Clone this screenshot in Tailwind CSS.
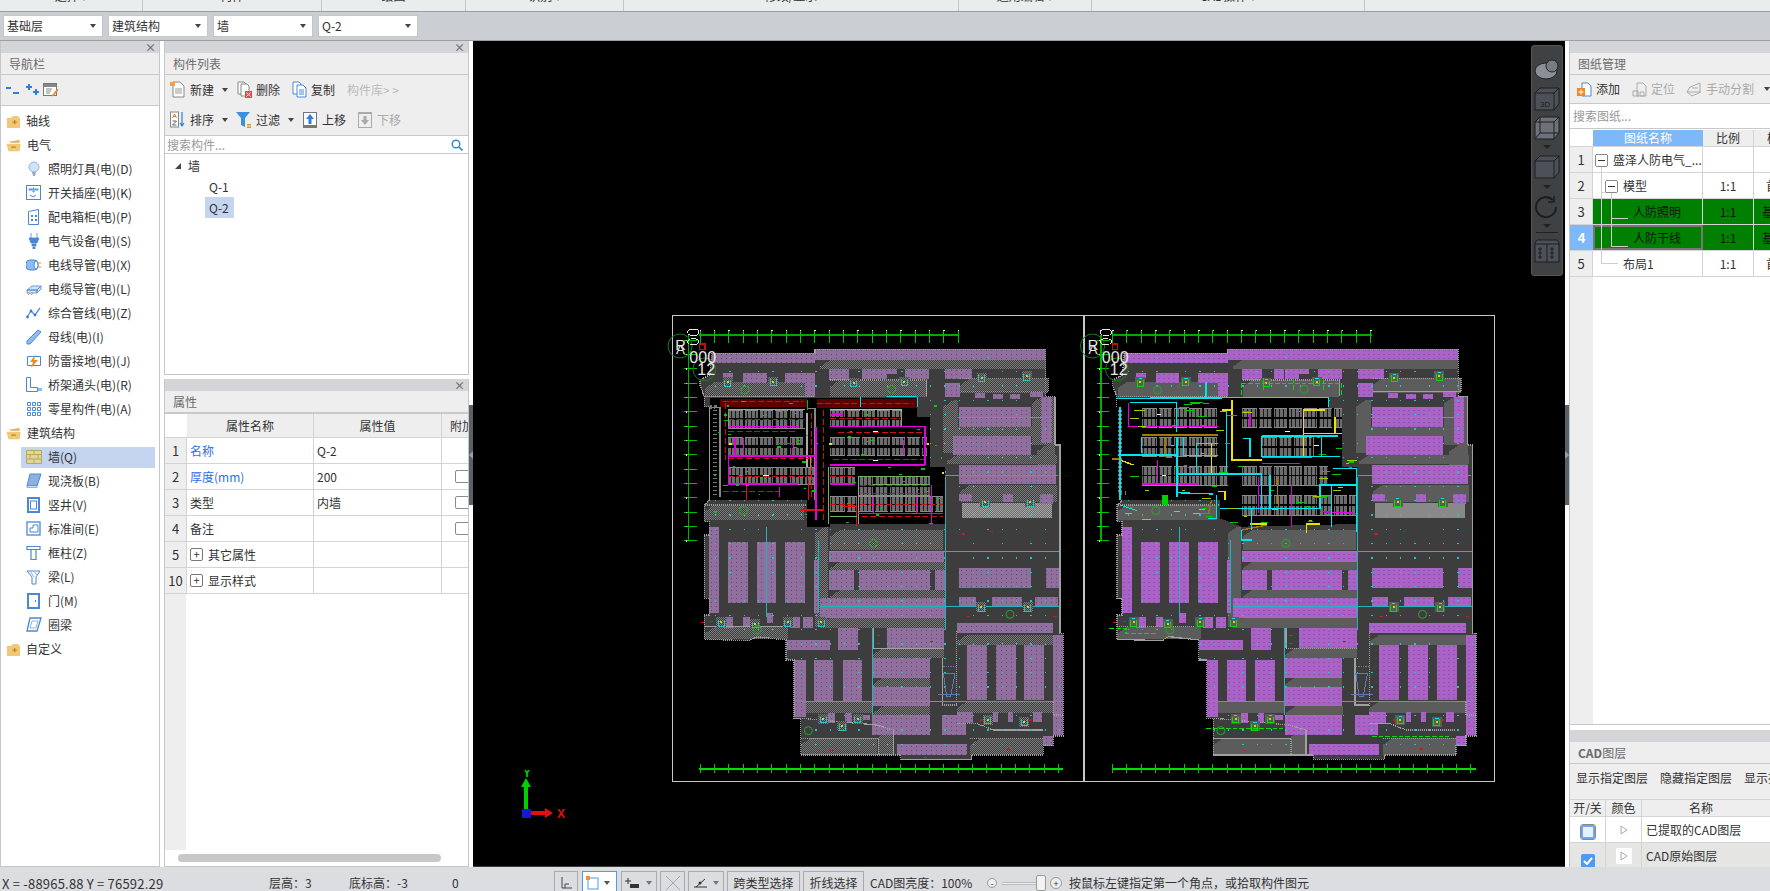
<!DOCTYPE html>
<html lang="zh">
<head>
<meta charset="UTF-8" />
<title>GCL</title>
<script src="https://cdn.jsdelivr.net/npm/@tailwindcss/browser@4"></script>
</head>
<body class="bg-white">
<div class="w-[1770px] h-[891px] flex flex-col overflow-hidden bg-white text-[12px] leading-none text-[#333] font-['Noto_Sans_CJK_SC',sans-serif]">

  <!-- ribbon, cut off at the top -->
  <div class="h-[12px] shrink-0 flex bg-[#e9edee] border-b border-[#9a9ea3] overflow-hidden">
    <div class="w-[143px] border-r border-[#c4c6c9] flex justify-center"><span class="-mt-[10px] h-[16px]">选择 ▾</span></div>
    <div class="w-[179px] border-r border-[#c4c6c9] flex justify-center"><span class="-mt-[10px] h-[16px]">构件</span></div>
    <div class="w-[144px] border-r border-[#c4c6c9] flex justify-center"><span class="-mt-[10px] h-[16px]">绘图</span></div>
    <div class="w-[158px] border-r border-[#c4c6c9] flex justify-center"><span class="-mt-[10px] h-[16px]">识别 ▾</span></div>
    <div class="w-[335px] border-r border-[#c4c6c9] flex justify-center"><span class="-mt-[10px] h-[16px]">修改/显示</span></div>
    <div class="w-[133px] border-r border-[#c4c6c9] flex justify-center"><span class="-mt-[10px] h-[16px]">通用编辑 ▾</span></div>
    <div class="w-[273px] border-r border-[#c4c6c9] flex justify-center"><span class="-mt-[10px] h-[16px]">CAD操作 ▾</span></div>
  </div>

  <!-- combo row -->
  <div class="h-[29px] shrink-0 flex items-center gap-[5px] pl-[3px] bg-[#cbced3] border-b border-[#9b9ea2]">
    <div class="w-[100px] h-[22px] bg-white border border-[#c6c6c6] flex items-center justify-between pl-[3px] pr-[6px]"><span>基础层</span><span class="w-0 h-0 border-x-[3px] border-x-transparent border-t-[4px] border-t-[#444]"></span></div>
    <div class="w-[100px] h-[22px] bg-white border border-[#c6c6c6] flex items-center justify-between pl-[3px] pr-[6px]"><span>建筑结构</span><span class="w-0 h-0 border-x-[3px] border-x-transparent border-t-[4px] border-t-[#444]"></span></div>
    <div class="w-[100px] h-[22px] bg-white border border-[#c6c6c6] flex items-center justify-between pl-[3px] pr-[6px]"><span>墙</span><span class="w-0 h-0 border-x-[3px] border-x-transparent border-t-[4px] border-t-[#444]"></span></div>
    <div class="w-[100px] h-[22px] bg-white border border-[#c6c6c6] flex items-center justify-between pl-[3px] pr-[6px]"><span>Q-2</span><span class="w-0 h-0 border-x-[3px] border-x-transparent border-t-[4px] border-t-[#444]"></span></div>
  </div>

  <div class="flex-1 flex min-h-0">
    <!-- nav -->
    <div class="w-[160px] shrink-0 flex flex-col border-x border-[#c4c6c9]">
      <div class="h-[12px] bg-[#d3d5d9] flex items-center justify-end pr-[3px] text-[#777] text-[11px] font-bold">×</div>
      <div class="h-[22px] bg-[#eeeeee] border-b border-[#c9c9c9] flex items-center pl-[8px] text-[#6b6b6b]">导航栏</div>
      <div class="h-[31px] bg-[#eeeeee] border-b border-[#c9c9c9] flex items-center pl-[4px] gap-[3px]">
        <svg class="w-[16px] h-[16px]" viewBox="0 0 16 16"><path d="M1 5h5v2H1zM8 10h6v2H8z" fill="#2f7fd8"/></svg>
        <svg class="w-[16px] h-[16px]" viewBox="0 0 16 16"><path d="M4 2v2H2v2h2v2h2V6h2V4H6V2zM11 7v2H9v2h2v2h2v-2h2V9h-2V7z" fill="#2f7fd8"/></svg>
        <svg class="w-[16px] h-[16px]" viewBox="0 0 16 16"><rect x=".5" y="1.5" width="13" height="12" fill="#fff" stroke="#777"/><path d="M1 2h12v3H1z" fill="#888"/><path d="M3 7h6M3 9h5M3 11h4" stroke="#888"/><path d="M9 13l5-6 1.500 1-5 6-2 .5z" fill="#f08a24"/></svg>
      </div>
      <div class="flex-1 pt-[3px]">
        <div class="h-[24px] flex items-center gap-[5px] pl-[5px]"><svg class="w-[15px] h-[15px]" viewBox="0 0 16 16"><path d="M1 4h5l1-2h6l1 2h1v11H1z" fill="#f0c87a"/><path d="M7 8h1.500V6.500h1.500V8h1.500v1.500H10V11H8.500V9.500H7z" fill="#c98a2a"/></svg>轴线</div>
        <div class="h-[24px] flex items-center gap-[5px] pl-[5px]"><svg class="w-[16px] h-[15px]" viewBox="0 0 16 16"><path d="M2 4l12-2v3H5z" fill="#d8b26a"/><path d="M0 6h15l-1 8H2z" fill="#f0c87a"/><path d="M5 9h5v1.500H5z" fill="#c98a2a"/></svg>电气</div>

        <div class="h-[24px] flex items-center gap-[6px] pl-[25px]"><svg class="w-[16px] h-[16px]" viewBox="0 0 16 16"><circle cx="8" cy="6" r="5" fill="#cfe3f8" stroke="#8fb6dd"/><path d="M6 11h4l-1 4H7z" fill="#9aa9b8"/></svg>照明灯具(电)(D)</div>
        <div class="h-[24px] flex items-center gap-[6px] pl-[25px]"><svg class="w-[16px] h-[16px]" viewBox="0 0 16 16"><rect x=".5" y=".5" width="14" height="14" fill="#fff" stroke="#4a88d6"/><path d="M3 4h3v1H3zM9 4h3v1H9zM7 3h1v4H7zM4 10l3 2 3-2" stroke="#4a88d6" fill="none"/></svg>开关插座(电)(K)</div>
        <div class="h-[24px] flex items-center gap-[6px] pl-[25px]"><svg class="w-[16px] h-[16px]" viewBox="0 0 16 16"><path d="M2.500 2.500l10-2v15h-10z" fill="#fff" stroke="#4a88d6"/><path d="M5 6h2v2H5zM9 6h2v2H9zM5 10h2v2H5zM9 10h2v2H9z" fill="#4a88d6"/></svg>配电箱柜(电)(P)</div>
        <div class="h-[24px] flex items-center gap-[6px] pl-[25px]"><svg class="w-[16px] h-[16px]" viewBox="0 0 16 16"><path d="M5 0v5M11 0v5M3 5h10L11 10H5zM6 11h4v2H6zM7 14h2v2H7z" fill="#4a88d6" stroke="#4a88d6" stroke-width=".8"/></svg>电气设备(电)(S)</div>
        <div class="h-[24px] flex items-center gap-[6px] pl-[25px]"><svg class="w-[16px] h-[16px]" viewBox="0 0 16 16"><rect x="0" y="3" width="12" height="10" rx="4" fill="#8fbdf0" stroke="#4a88d6"/><ellipse cx="10" cy="8" rx="2" ry="4" fill="#fff" stroke="#4a88d6"/><path d="M12 6h3M12 10h3" stroke="#f08a24"/></svg>电线导管(电)(X)</div>
        <div class="h-[24px] flex items-center gap-[6px] pl-[25px]"><svg class="w-[16px] h-[16px]" viewBox="0 0 16 16"><path d="M1 9l5-4h9l-4 4zM1 9h10v3H1zM11 9l4-4v3l-4 4z" fill="#cfe3f8" stroke="#4a88d6" stroke-width=".8"/><path d="M2 14l2-2M5 14l2-2" stroke="#f08a24"/></svg>电缆导管(电)(L)</div>
        <div class="h-[24px] flex items-center gap-[6px] pl-[25px]"><svg class="w-[16px] h-[16px]" viewBox="0 0 16 16"><path d="M1 12l4-6 4 4 5-7" fill="none" stroke="#5a8fd0" stroke-width="1.300"/><circle cx="5" cy="6" r="1.400" fill="#2f7fd8"/><circle cx="9" cy="10" r="1.400" fill="#2f7fd8"/><circle cx="1.500" cy="12" r="1.400" fill="#2f7fd8"/></svg>综合管线(电)(Z)</div>
        <div class="h-[24px] flex items-center gap-[6px] pl-[25px]"><svg class="w-[16px] h-[16px]" viewBox="0 0 16 16"><path d="M1 12L12 1l3 2L4 15H1z" fill="#8fbdf0" stroke="#4a88d6"/></svg>母线(电)(I)</div>
        <div class="h-[24px] flex items-center gap-[6px] pl-[25px]"><svg class="w-[16px] h-[16px]" viewBox="0 0 16 16"><path d="M1.500 3.500h13v9h-13z" fill="#fff" stroke="#4a88d6"/><path d="M10 1L4 9h3l-2 6 7-8H8z" fill="#f08a24"/></svg>防雷接地(电)(J)</div>
        <div class="h-[24px] flex items-center gap-[6px] pl-[25px]"><svg class="w-[16px] h-[16px]" viewBox="0 0 16 16"><path d="M.5.5h4v10h7v4h-11z" fill="#fff" stroke="#4a88d6"/><path d="M12 11h4v3h-4z" fill="#8fbdf0"/></svg>桥架通头(电)(R)</div>
        <div class="h-[24px] flex items-center gap-[6px] pl-[25px]"><svg class="w-[16px] h-[16px]" viewBox="0 0 16 16"><path d="M1.500 1.500h3v3h-3zM6.500 1.500h3v3h-3zM11.500 1.500h3v3h-3zM1.500 6.500h3v3h-3zM6.500 6.500h3v3h-3zM11.500 6.500h3v3h-3zM1.500 11.500h3v3h-3zM6.500 11.500h3v3h-3zM11.500 11.500h3v3h-3z" fill="none" stroke="#4a88d6"/></svg>零星构件(电)(A)</div>

        <div class="h-[24px] flex items-center gap-[5px] pl-[5px]"><svg class="w-[16px] h-[15px]" viewBox="0 0 16 16"><path d="M2 4l12-2v3H5z" fill="#d8b26a"/><path d="M0 6h15l-1 8H2z" fill="#f0c87a"/><path d="M5 9h5v1.500H5z" fill="#c98a2a"/></svg>建筑结构</div>

        <div class="h-[21px] my-[1.5px] ml-[20px] mr-[4px] bg-[#c5d5ef] flex items-center gap-[6px] pl-[5px]"><svg class="w-[16px] h-[14px]" viewBox="0 0 16 14"><path d="M.5.500h15v13H.5zM.5 4.500h15M.5 9h15M8 .5v4M4 4.500V9M12 4.500V9M8 9v4.500" fill="#dfd5a0" stroke="#b8a95a"/></svg>墙(Q)</div>
        <div class="h-[24px] flex items-center gap-[6px] pl-[25px]"><svg class="w-[16px] h-[16px]" viewBox="0 0 16 16"><path d="M4 1h11l-4 12H1z" fill="#8fb0dd" stroke="#4a88d6"/><path d="M1 13h10v1.500H1z" fill="#fff" stroke="#4a88d6" stroke-width=".6"/></svg>现浇板(B)</div>
        <div class="h-[24px] flex items-center gap-[6px] pl-[25px]"><svg class="w-[16px] h-[16px]" viewBox="0 0 16 16"><rect x="2" y="1" width="11" height="14" fill="#fff" stroke="#4a88d6" stroke-width="2"/><rect x="4.500" y="4" width="6" height="8" fill="#fff" stroke="#4a88d6"/></svg>竖井(V)</div>
        <div class="h-[24px] flex items-center gap-[6px] pl-[25px]"><svg class="w-[16px] h-[16px]" viewBox="0 0 16 16"><rect x="1" y="1" width="13" height="13" fill="#fff" stroke="#4a88d6" stroke-width="1.300"/><path d="M4 7h3V4h5v7H4z" fill="none" stroke="#4a88d6"/></svg>标准间(E)</div>
        <div class="h-[24px] flex items-center gap-[6px] pl-[25px]"><svg class="w-[16px] h-[16px]" viewBox="0 0 16 16"><path d="M1 1.500h13v3H1zM5 4.500h5v10H5z" fill="#fff" stroke="#4a88d6" stroke-width="1.200"/></svg>框柱(Z)</div>
        <div class="h-[24px] flex items-center gap-[6px] pl-[25px]"><svg class="w-[16px] h-[16px]" viewBox="0 0 16 16"><path d="M1 2h13l-4 6v7H6V8z" fill="#fff" stroke="#4a88d6"/><path d="M4 2l4 6M8 2l3 4" stroke="#8fb6dd"/></svg>梁(L)</div>
        <div class="h-[24px] flex items-center gap-[6px] pl-[25px]"><svg class="w-[16px] h-[16px]" viewBox="0 0 16 16"><rect x="2" y="1" width="11" height="14" fill="#fff" stroke="#4a88d6" stroke-width="2"/><path d="M9 7h1v2H9z" fill="#4a88d6"/></svg>门(M)</div>
        <div class="h-[24px] flex items-center gap-[6px] pl-[25px]"><svg class="w-[16px] h-[16px]" viewBox="0 0 16 16"><path d="M4 1h11l-4 13H1z" fill="#fff" stroke="#4a88d6" stroke-width="1.300"/><path d="M6 4h6l-2 7H4z" fill="none" stroke="#8fb6dd"/></svg>圈梁</div>
        <div class="h-[24px] flex items-center gap-[5px] pl-[5px]"><svg class="w-[15px] h-[15px]" viewBox="0 0 16 16"><path d="M1 4h5l1-2h6l1 2h1v11H1z" fill="#f0c87a"/><path d="M7 8h1.500V6.500h1.500V8h1.500v1.500H10V11H8.500V9.500H7z" fill="#c98a2a"/></svg>自定义</div>
      </div>
      <div class="h-px bg-[#c4c6c9]"></div>
    </div>

    <div class="w-[4px] shrink-0"></div>

    <!-- component list + properties -->
    <div class="w-[305px] shrink-0 flex flex-col">
      <div class="h-[334px] shrink-0 flex flex-col border-x border-b border-[#c4c6c9]">
        <div class="h-[12px] bg-[#d3d5d9] flex items-center justify-end pr-[3px] text-[#777] text-[11px] font-bold">×</div>
        <div class="h-[22px] bg-[#eeeeee] border-b border-[#c9c9c9] flex items-center pl-[8px] text-[#6b6b6b]">构件列表</div>
        <div class="h-[29px] bg-[#eeeeee] flex items-center pl-[5px]">
          <svg class="w-[15px] h-[17px] mr-[5px]" viewBox="0 0 15 17"><path d="M3 1h7l4 4v11H3z" fill="#fff" stroke="#888"/><path d="M5 8h7M5 10h7M5 12h7" stroke="#999"/><path d="M0 1h5v4H0z" fill="#f3a33a"/></svg><span class="w-[32px]">新建</span><span class="w-0 h-0 mr-[9px] border-x-[3px] border-x-transparent border-t-[4px] border-t-[#444]"></span>
          <svg class="w-[15px] h-[17px] mr-[4px]" viewBox="0 0 15 17"><path d="M1 1h6l2 2v10H1z" fill="#fff" stroke="#888"/><path d="M4 3h6l2 2v10H4z" fill="#fff" stroke="#888"/><path d="M8 10h7v7H8z" fill="#e04b4b"/><path d="M9.500 11.500l4 4m0-4l-4 4" stroke="#fff"/></svg><span class="w-[36px]">删除</span>
          <svg class="w-[15px] h-[17px] mr-[4px]" viewBox="0 0 15 17"><path d="M1 1h6l2 2v10H1z" fill="#fff" stroke="#4a88d6"/><path d="M5 4h6l3 3v9H5z" fill="#fff" stroke="#4a88d6"/><path d="M7 9h5M7 11h5M7 13h5" stroke="#4a88d6"/></svg><span class="w-[36px]">复制</span>
          <span class="text-[#bbbbbb] whitespace-nowrap">构件库&gt; &gt;</span>
        </div>
        <div class="h-[32px] bg-[#eeeeee] border-b border-[#c9c9c9] flex items-center pl-[5px]">
          <svg class="w-[15px] h-[17px] mr-[5px]" viewBox="0 0 15 17"><rect x=".5" y="1" width="8" height="15" fill="#fff" stroke="#888"/><path d="M2.500 7l2-4 2 4M3 5.500h3" fill="none" stroke="#e07a2a"/><path d="M2.500 10h4l-4 4h4" fill="none" stroke="#666"/><path d="M12 1v13M10 12l2 3 2-3" fill="none" stroke="#2f7fd8" stroke-width="1.200"/></svg><span class="w-[32px]">排序</span><span class="w-0 h-0 mr-[8px] border-x-[3px] border-x-transparent border-t-[4px] border-t-[#444]"></span>
          <svg class="w-[15px] h-[16px] mr-[5px]" viewBox="0 0 15 16"><path d="M0 0h14L9 6v9L5 13V6z" fill="#3d8fe0"/><path d="M11 12h4v1.500h-4zM11 14.500h4V16h-4z" fill="#f08a24"/></svg><span class="w-[32px]">过滤</span><span class="w-0 h-0 mr-[9px] border-x-[3px] border-x-transparent border-t-[4px] border-t-[#444]"></span>
          <svg class="w-[14px] h-[16px] mr-[5px]" viewBox="0 0 14 16"><rect x=".5" y=".5" width="13" height="14" fill="#fff" stroke="#777"/><path d="M0 13h14v3H0z" fill="#777"/><path d="M7 2l4 5H8.500v5h-3V7H3z" fill="#2f7fd8"/></svg><span class="w-[36px]">上移</span>
          <svg class="w-[14px] h-[16px] mr-[5px]" viewBox="0 0 14 16"><rect x=".5" y=".5" width="13" height="15" fill="#eee" stroke="#aaa"/><path d="M0 0h14v2H0z" fill="#aaa"/><path d="M7 13l4-5H8.500V4h-3v4H3z" fill="#aaa"/></svg><span class="text-[#aaaaaa]">下移</span>
        </div>
        <div class="h-[18px] border-b border-[#c9c9c9] flex items-center justify-between pl-[2px] pr-[5px] text-[#999]">搜索构件...<svg class="w-[12px] h-[12px]" viewBox="0 0 12 12"><circle cx="5" cy="5" r="3.800" fill="none" stroke="#2f86c8" stroke-width="1.400"/><path d="M8 8l3.500 3.500" stroke="#2f86c8" stroke-width="1.600"/></svg></div>
        <div class="flex-1 pt-[1px]">
          <div class="h-[21px] flex items-center pl-[10px]"><span class="w-0 h-0 mr-[7px] border-l-[6px] border-l-transparent border-b-[6px] border-b-[#444]"></span>墙</div>
          <div class="h-[21px] flex items-center pl-[44px]">Q-1</div>
          <div class="h-[21px] ml-[40px] w-[29px] bg-[#c5d5ef] flex items-center pl-[4px]">Q-2</div>
        </div>
      </div>

      <div class="h-[4px] shrink-0"></div>

      <div class="flex-1 flex flex-col border-x border-b border-[#c4c6c9] overflow-hidden">
        <div class="h-[12px] shrink-0 bg-[#d3d5d9] flex items-center justify-end pr-[3px] text-[#777] text-[11px] font-bold">×</div>
        <div class="h-[23px] shrink-0 bg-[#eeeeee] border-b-2 border-[#c9c9c9] flex items-center pl-[8px] text-[#6b6b6b]">属性</div>
        <div class="h-[24px] shrink-0 flex border-b border-[#d4d4d4]">
          <div class="w-[22px] bg-white"></div>
          <div class="w-[127px] bg-[#eeeeee] border-r border-[#d4d4d4] flex items-center justify-center">属性名称</div>
          <div class="w-[128px] bg-[#eeeeee] border-r border-[#d4d4d4] flex items-center justify-center">属性值</div>
          <div class="flex-1 bg-[#eeeeee] flex items-center pl-[8px] whitespace-nowrap overflow-hidden">附加</div>
        </div>
        <div class="h-[26px] shrink-0 flex border-b border-[#d4d4d4]">
          <div class="w-[22px] bg-[#eeeeee] border-r border-[#d4d4d4] flex items-center justify-center text-[13px]">1</div>
          <div class="w-[127px] border-r border-[#d4d4d4] flex items-center pl-[3px] text-[#2f6fe8]">名称</div>
          <div class="w-[128px] border-r border-[#d4d4d4] flex items-center pl-[3px]">Q-2</div>
          <div class="flex-1"></div>
        </div>
        <div class="h-[26px] shrink-0 flex border-b border-[#d4d4d4]">
          <div class="w-[22px] bg-[#eeeeee] border-r border-[#d4d4d4] flex items-center justify-center text-[13px]">2</div>
          <div class="w-[127px] border-r border-[#d4d4d4] flex items-center pl-[3px] text-[#2f6fe8]">厚度(mm)</div>
          <div class="w-[128px] border-r border-[#d4d4d4] flex items-center pl-[3px]">200</div>
          <div class="flex-1 flex items-center overflow-hidden pl-[13px]"><div class="w-[16px] h-[13px] shrink-0 border border-[#8a8a8a] rounded-[2px]"></div></div>
        </div>
        <div class="h-[26px] shrink-0 flex border-b border-[#d4d4d4]">
          <div class="w-[22px] bg-[#eeeeee] border-r border-[#d4d4d4] flex items-center justify-center text-[13px]">3</div>
          <div class="w-[127px] border-r border-[#d4d4d4] flex items-center pl-[3px]">类型</div>
          <div class="w-[128px] border-r border-[#d4d4d4] flex items-center pl-[3px]">内墙</div>
          <div class="flex-1 flex items-center overflow-hidden pl-[13px]"><div class="w-[16px] h-[13px] shrink-0 border border-[#8a8a8a] rounded-[2px]"></div></div>
        </div>
        <div class="h-[26px] shrink-0 flex border-b border-[#d4d4d4]">
          <div class="w-[22px] bg-[#eeeeee] border-r border-[#d4d4d4] flex items-center justify-center text-[13px]">4</div>
          <div class="w-[127px] border-r border-[#d4d4d4] flex items-center pl-[3px]">备注</div>
          <div class="w-[128px] border-r border-[#d4d4d4]"></div>
          <div class="flex-1 flex items-center overflow-hidden pl-[13px]"><div class="w-[16px] h-[13px] shrink-0 border border-[#8a8a8a] rounded-[2px]"></div></div>
        </div>
        <div class="h-[26px] shrink-0 flex border-b border-[#d4d4d4]">
          <div class="w-[22px] bg-[#eeeeee] border-r border-[#d4d4d4] flex items-center justify-center text-[13px]">5</div>
          <div class="w-[127px] border-r border-[#d4d4d4] flex items-center pl-[3px] gap-[5px]"><span class="w-[13px] h-[13px] border border-[#777] rounded-[2px] flex items-center justify-center text-[11px]">+</span>其它属性</div>
          <div class="w-[128px] border-r border-[#d4d4d4]"></div>
          <div class="flex-1"></div>
        </div>
        <div class="h-[26px] shrink-0 flex border-b border-[#d4d4d4]">
          <div class="w-[22px] bg-[#eeeeee] border-r border-[#d4d4d4] flex items-center justify-center text-[13px]">10</div>
          <div class="w-[127px] border-r border-[#d4d4d4] flex items-center pl-[3px] gap-[5px]"><span class="w-[13px] h-[13px] border border-[#777] rounded-[2px] flex items-center justify-center text-[11px]">+</span>显示样式</div>
          <div class="w-[128px] border-r border-[#d4d4d4]"></div>
          <div class="flex-1"></div>
        </div>
        <div class="flex-1 flex"><div class="w-[21px] bg-[#eeeeee]"></div></div>
        <div class="h-[16px] shrink-0 flex items-center pl-[13px]"><div class="w-[263px] h-[8px] bg-[#c8c8c8] rounded-[4px]"></div></div>
      </div>
    </div>

    <!-- splitter -->
    <div class="w-[4px] shrink-0 flex flex-col"><div class="h-[364px]"></div><div class="h-[100px] bg-[#5a6068] flex items-center"><span class="w-0 h-0 border-y-[4px] border-y-transparent border-r-[4px] border-r-[#9aa0a8]"></span></div></div>

    <!-- cad canvas -->
    <div class="w-[1092px] shrink-0 bg-black relative border-b border-[#3a3a3a] overflow-hidden">
      <svg id="cad" class="absolute inset-0" width="1092" height="825" viewBox="-561 -777 3276 2475" shape-rendering="crispEdges">
        <defs>
          <pattern id="hatch" width="6" height="6" patternUnits="userSpaceOnUse"><rect width="6" height="6" fill="#3c3c3c"/><rect width="3" height="3" fill="#7c7c7c"/><rect x="3" y="3" width="3" height="3" fill="#7c7c7c"/></pattern>
          <pattern id="hatch2" width="6" height="6" patternUnits="userSpaceOnUse"><rect width="6" height="6" fill="#6a6a6a"/><rect width="3" height="3" fill="#a8a8a8"/><rect x="3" y="3" width="3" height="3" fill="#a8a8a8"/></pattern>
          <pattern id="pl" width="15" height="12" patternUnits="userSpaceOnUse"><rect width="15" height="12" fill="#906f9e"/><rect x="3" y="6" width="3" height="3" fill="#5c4d62"/></pattern>
          <pattern id="pr" width="15" height="12" patternUnits="userSpaceOnUse"><rect width="15" height="12" fill="#aa62c9"/><rect x="3" y="6" width="3" height="3" fill="#6d4a7e"/></pattern>
          <pattern id="st" width="12" height="3" patternUnits="userSpaceOnUse"><rect width="12" height="3" fill="#1a1a1a"/><rect width="9" height="3" fill="#6c6c6c"/></pattern>
        </defs>
      </svg>

      <!-- axis marker -->
      <svg class="absolute left-[34px] top-[729px]" width="70" height="60" viewBox="0 0 70 60">
        <path d="M19 8l-5 9h3v24h4V17h3z" fill="#00d000"/>
        <path d="M24 41h14v-3l8 5-8 5v-3H24z" fill="#e01010"/>
        <rect x="15" y="39" width="9" height="9" fill="#1818d8"/>
        <text x="16" y="7" fill="#00d000" font-size="12" font-family="Liberation Sans" font-weight="bold">Y</text>
        <text x="50" y="48" fill="#e01010" font-size="12" font-family="Liberation Sans" font-weight="bold">X</text>
      </svg>

      <!-- view cube bar -->
      <div class="absolute left-[1058px] top-[4px] w-[32px] h-[231px] bg-[#3f4143] rounded-[3px] border border-[#555] flex flex-col items-center pt-[12px]">
        <svg class="w-[26px] h-[24px]" viewBox="0 0 26 24"><ellipse cx="12" cy="13" rx="11" ry="8" fill="#8b8f96" stroke="#222"/><circle cx="18" cy="8" r="6" fill="#787c84" stroke="#222"/></svg>
        <svg class="w-[26px] h-[24px] mt-[5px]" viewBox="0 0 26 24"><path d="M1 6l5-5h19v16l-5 6H1z" fill="#4c5159" stroke="#1c1e20"/><path d="M1 6h19v17M20 6l5-5" fill="none" stroke="#1c1e20"/><text x="6" y="20" font-size="8" fill="#1c1e20" font-family="Liberation Sans">3D</text></svg>
        <svg class="w-[26px] h-[24px] mt-[5px]" viewBox="0 0 26 24"><path d="M1 6l5-5h19v16l-5 6H1z" fill="#6d727a" stroke="#1c1e20"/><path d="M1 6h19v17M20 6l5-5M6 1v16h19M6 17l-5 6" fill="none" stroke="#1c1e20"/></svg>
        <span class="w-0 h-0 mt-[5px] border-x-[4px] border-x-transparent border-t-[4px] border-t-[#222]"></span>
        <svg class="w-[26px] h-[24px] mt-[6px]" viewBox="0 0 26 24"><path d="M1 6l5-5h19v16l-5 6H1z" fill="#4c5159" stroke="#1c1e20"/><path d="M1 6h19v17M20 6l5-5" fill="none" stroke="#1c1e20"/></svg>
        <span class="w-0 h-0 mt-[6px] border-x-[4px] border-x-transparent border-t-[4px] border-t-[#222]"></span>
        <svg class="w-[24px] h-[24px] mt-[6px]" viewBox="0 0 24 24"><path d="M21 12a10 10 0 1 1-3-7" fill="none" stroke="#1c1e20" stroke-width="2"/><path d="M19 1v6h-6" fill="none" stroke="#1c1e20" stroke-width="1.500"/></svg>
        <span class="w-0 h-0 mt-[5px] border-x-[4px] border-x-transparent border-t-[4px] border-t-[#222]"></span>
        <div class="w-[22px] h-px bg-[#222] mt-[4px]"></div>
        <svg class="w-[26px] h-[24px] mt-[6px]" viewBox="0 0 26 24"><path d="M3 1h20l2 3v19H1V4z" fill="#4c5159" stroke="#1c1e20"/><path d="M1 5h24M13 5v18M5 9h2v2H5zM5 13h2v2H5zM5 17h2v2H5zM17 9h2v2h-2zM17 13h2v2h-2zM17 17h2v2h-2z" fill="none" stroke="#1c1e20"/></svg>
      </div>
    </div>

    <!-- splitter -->
    <div class="w-[4px] shrink-0 flex flex-col"><div class="h-[364px]"></div><div class="h-[100px] bg-[#5a6068] flex items-center justify-end"><span class="w-0 h-0 border-y-[4px] border-y-transparent border-l-[4px] border-l-[#9aa0a8]"></span></div></div>

    <!-- right side -->
    <div class="w-[201px] shrink-0 flex flex-col border-l border-[#c4c6c9] overflow-hidden">
      <div class="h-[12px] shrink-0 bg-[#d3d5d9]"></div>
      <div class="h-[22px] shrink-0 bg-[#eeeeee] border-b border-[#c9c9c9] flex items-center pl-[8px] text-[#6b6b6b]">图纸管理</div>
      <div class="h-[28px] shrink-0 bg-[#eeeeee] flex items-center pl-[7px] whitespace-nowrap">
        <svg class="w-[15px] h-[15px] mr-[4px]" viewBox="0 0 15 15"><path d="M5 1h6l3 3v10H5z" fill="#fff" stroke="#4a88d6"/><path d="M0 6h8v8H0z" fill="#f08a24"/><path d="M3.500 7.500h1v2h2v1h-2v2h-1v-2h-2v-1h2z" fill="#fff"/></svg><span class="w-[36px]">添加</span>
        <svg class="w-[15px] h-[15px] mr-[4px]" viewBox="0 0 15 15"><path d="M5 1h6l3 3v10H5z" fill="#eee" stroke="#aaa"/><path d="M1 9h5v5H1zM8 10h4v4H8z" fill="none" stroke="#aaa"/></svg><span class="w-[35px] text-[#aaaaaa]">定位</span>
        <svg class="w-[16px] h-[15px] mr-[4px]" viewBox="0 0 16 15"><path d="M4 5l10-4v9H1z" fill="#eee" stroke="#aaa"/><path d="M1 10l5 4 9-4M6 6h6" fill="none" stroke="#aaa"/></svg><span class="w-[58px] text-[#aaaaaa]">手动分割</span><span class="w-0 h-0 border-x-[3px] border-x-transparent border-t-[4px] border-t-[#444]"></span>
      </div>
      <div class="h-[26px] shrink-0 border-y border-[#c9c9c9] flex items-center pl-[3px] text-[#999]">搜索图纸...</div>

      <div class="h-[595px] shrink-0 mt-[1px] relative border-b border-[#c4c6c9] overflow-hidden">
        <div class="h-[17px] flex border-b border-[#d4d4d4] w-[260px]">
          <div class="w-[23px] bg-white"></div>
          <div class="w-[110px] bg-[#7fb8f8] text-white flex items-center justify-center">图纸名称</div>
          <div class="w-[51px] bg-[#eeeeee] border-r border-[#d4d4d4] flex items-center justify-center">比例</div>
          <div class="flex-1 bg-[#eeeeee] flex items-center pl-[13px]">楼层</div>
        </div>
        <div class="h-[26px] flex border-b border-[#d4d4d4] w-[260px]">
          <div class="w-[23px] bg-[#eeeeee] border-r border-[#d4d4d4] flex items-center justify-center text-[13px]">1</div>
          <div class="w-[110px] border-r border-[#d4d4d4] flex items-center pl-[20px] whitespace-nowrap">盛泽人防电气_...</div>
          <div class="w-[51px] border-r border-[#d4d4d4]"></div>
          <div class="flex-1"></div>
        </div>
        <div class="h-[26px] flex border-b border-[#d4d4d4] w-[260px]">
          <div class="w-[23px] bg-[#eeeeee] border-r border-[#d4d4d4] flex items-center justify-center text-[13px]">2</div>
          <div class="w-[110px] border-r border-[#d4d4d4] flex items-center pl-[30px]">模型</div>
          <div class="w-[51px] border-r border-[#d4d4d4] flex items-center justify-center">1:1</div>
          <div class="flex-1 flex items-center pl-[12px]">首层</div>
        </div>
        <div class="h-[26px] flex border-b border-[#d4d4d4] w-[260px] bg-[#008000]">
          <div class="w-[23px] bg-[#eeeeee] border-r border-[#d4d4d4] flex items-center justify-center text-[13px]">3</div>
          <div class="w-[110px] border-r border-[#d4d4d4] flex items-center pl-[40px] text-[#111]">人防照明</div>
          <div class="w-[51px] border-r border-[#d4d4d4] flex items-center justify-center text-[#111]">1:1</div>
          <div class="flex-1 flex items-center pl-[8px] text-[#111]">基础层</div>
        </div>
        <div class="h-[26px] flex border-b border-[#d4d4d4] w-[260px] bg-[#008000]">
          <div class="w-[23px] bg-[#7fb8f8] text-white font-bold flex items-center justify-center text-[13px]">4</div>
          <div class="w-[110px] border-2 border-[#777] flex items-center pl-[38px] text-[#111]">人防干线</div>
          <div class="w-[51px] border-r border-[#d4d4d4] flex items-center justify-center text-[#111]">1:1</div>
          <div class="flex-1 flex items-center pl-[8px] text-[#111]">基础层</div>
        </div>
        <div class="h-[26px] flex border-b border-[#d4d4d4] w-[260px]">
          <div class="w-[23px] bg-[#eeeeee] border-r border-[#d4d4d4] flex items-center justify-center text-[13px]">5</div>
          <div class="w-[110px] border-r border-[#d4d4d4] flex items-center pl-[30px]">布局1</div>
          <div class="w-[51px] border-r border-[#d4d4d4] flex items-center justify-center">1:1</div>
          <div class="flex-1 flex items-center pl-[12px]">首层</div>
        </div>
        <div class="w-[23px] h-[450px] bg-[#eeeeee]"></div>
        <!-- tree lines over the rows -->
        <svg class="absolute left-0 top-0" width="201" height="150" viewBox="0 0 201 150" shape-rendering="crispEdges">
          <path d="M31 36v97h17M41 62v54h17M41 88h17M31 62h5" fill="none" stroke="#cfcfcf"/>
          <rect x="25.500" y="24.500" width="12" height="12" rx="2" fill="#fff" stroke="#888"/><path d="M28 30.500h7" stroke="#333"/>
          <rect x="35.500" y="50.500" width="12" height="12" rx="2" fill="#fff" stroke="#888"/><path d="M38 56.500h7" stroke="#333"/>
        </svg>
      </div>

      <div class="h-[5px] shrink-0"></div>

      <div class="flex-1 flex flex-col min-h-0 overflow-hidden">
        <div class="h-[12px] shrink-0 bg-[#d3d5d9]"></div>
        <div class="h-[22px] shrink-0 bg-[#eeeeee] border-b border-[#c9c9c9] flex items-center pl-[8px] text-[#6b6b6b]"><span class="font-bold">CAD</span>图层</div>
        <div class="h-[35px] shrink-0 bg-[#eeeeee] flex items-start pt-[8px] pl-[6px] gap-[12px] whitespace-nowrap"><span>显示指定图层</span><span>隐藏指定图层</span><span>显示指定图层</span></div>
        <div class="h-[18px] shrink-0 flex border-y border-[#d4d4d4] bg-[#eeeeee]">
          <div class="w-[36px] border-r border-[#d4d4d4] flex items-center justify-center">开/关</div>
          <div class="w-[36px] border-r border-[#d4d4d4] flex items-center justify-center">颜色</div>
          <div class="flex-1 flex items-center justify-center pr-[10px]">名称</div>
        </div>
        <div class="h-[26px] shrink-0 flex border-b border-[#d4d4d4]">
          <div class="w-[36px] border-r border-[#d4d4d4] flex items-end justify-center pb-[3px]"><span class="w-[14px] h-[14px] bg-[#e8f0fa] border-2 border-[#6aa8f0] outline outline-[#888] rounded-[2px]"></span></div>
          <div class="w-[36px] border-r border-[#d4d4d4] flex items-center justify-center"><svg class="w-[8px] h-[10px]" viewBox="0 0 8 10"><path d="M1 1l6 4-6 4z" fill="#fff" stroke="#aaa"/></svg></div>
          <div class="flex-1 flex items-center pl-[4px] whitespace-nowrap">已提取的CAD图层</div>
        </div>
        <div class="h-[26px] shrink-0 flex bg-[#e5e5e3]">
          <div class="w-[36px] border-r border-[#d4d4d4] flex items-end justify-center pb-[1px]"><span class="w-[14px] h-[14px] bg-[#4e9af5] rounded-[2px] flex items-center justify-center"><svg class="w-[10px] h-[8px]" viewBox="0 0 10 8"><path d="M1 4l3 3 5-6" fill="none" stroke="#fff" stroke-width="2"/></svg></span></div>
          <div class="w-[36px] border-r border-[#d4d4d4] flex items-center justify-center"><span class="w-[16px] h-[16px] bg-white flex items-center justify-center"><svg class="w-[8px] h-[10px]" viewBox="0 0 8 10"><path d="M1 1l6 4-6 4z" fill="#fff" stroke="#aaa"/></svg></span></div>
          <div class="flex-1 flex items-center pl-[4px] whitespace-nowrap">CAD原始图层</div>
        </div>
      </div>
    </div>
  </div>

  <!-- status bar -->
  <div class="h-[24px] shrink-0 flex items-start bg-[#dcdde0] overflow-hidden pl-[2px] whitespace-nowrap">
    <span class="w-[267px] mt-[10px] text-[13px] tracking-[.2px]">X = -88965.88 Y = 76592.29</span>
    <span class="w-[80px] mt-[10px]">层高：3</span>
    <span class="w-[103px] mt-[10px]">底标高：-3</span>
    <span class="w-[102px] mt-[10px]">0</span>
    <div class="w-[24px] h-[24px] mt-[4px] border border-[#aaa] mr-[4px] flex items-center justify-center"><svg class="w-[12px] h-[12px]" viewBox="0 0 12 12"><path d="M2 0v11h10M5 11V7h4" fill="none" stroke="#444"/></svg></div>
    <div class="w-[35px] h-[24px] mt-[4px] border border-[#4a9cf0] bg-white mr-[4px] flex items-center pl-[3px] gap-[5px]"><svg class="w-[13px] h-[14px]" viewBox="0 0 13 14"><rect x="2" y="2" width="10" height="11" fill="none" stroke="#4a9cf0"/><rect width="4" height="4" fill="#f0923a"/></svg><span class="w-0 h-0 border-x-[3px] border-x-transparent border-t-[4px] border-t-[#555]"></span></div>
    <div class="w-[36px] h-[24px] mt-[4px] border border-[#aaa] mr-[3px] flex items-center pl-[3px] gap-[5px]"><svg class="w-[16px] h-[12px]" viewBox="0 0 16 12"><path d="M3 1v6M0 4h6" stroke="#333"/><rect x="5" y="7" width="9" height="4" fill="#333"/></svg><span class="w-0 h-0 border-x-[3px] border-x-transparent border-t-[4px] border-t-[#777]"></span></div>
    <div class="w-[25px] h-[24px] mt-[4px] border border-[#aaa] mr-[3px] flex items-center justify-center"><svg class="w-[16px] h-[16px]" viewBox="0 0 16 16"><path d="M1 1l14 14M15 1L1 15" stroke="#aaa"/></svg></div>
    <div class="w-[36px] h-[24px] mt-[4px] border border-[#aaa] mr-[3px] flex items-center pl-[4px] gap-[5px]"><svg class="w-[15px] h-[12px]" viewBox="0 0 15 12"><path d="M1 10h13M3 10l9-8" stroke="#333"/><circle cx="7" cy="6" r="1.500" fill="#333"/></svg><span class="w-0 h-0 border-x-[3px] border-x-transparent border-t-[4px] border-t-[#777]"></span></div>
    <div class="w-[73px] h-[24px] mt-[4px] border border-[#aaa] mr-[3px] flex items-start justify-center pt-[5px]">跨类型选择</div>
    <div class="w-[61px] h-[24px] mt-[4px] border border-[#aaa] mr-[6px] flex items-start justify-center pt-[5px]">折线选择</div>
    <span class="w-[117px] mt-[10px]">CAD图亮度：100%</span>
    <div class="flex items-center mt-[8px]">
      <span class="w-[10px] h-[10px] rounded-full bg-[#eee] border border-[#999] flex items-center justify-center text-[9px]">-</span>
      <span class="w-[34px] h-[3px] ml-[5px] bg-[#eee] border-y border-[#bbb]"></span>
      <span class="w-[10px] h-[16px] bg-[#f2f2f2] border border-[#999] rounded-[2px]"></span>
      <span class="w-[12px] h-[12px] ml-[4px] rounded-full bg-[#eee] border border-[#999] flex items-center justify-center text-[9px]">+</span>
    </div>
    <span class="ml-[7px] mt-[10px]">按鼠标左键指定第一个角点，或拾取构件图元</span>
  </div>
</div>

<script>
  // cad drawing, coordinates are 3 units per screen pixel
  let seed = 7;
  const rnd = (n) => { seed = (seed * 16807) % 2147483647; return seed % n; };
  const rect = (x, y, w, h, f) => `<rect x="${x}" y="${y}" width="${w}" height="${h}" fill="${f}"/>`;
  const line = (p, c, w = 3, dash = "") => `<polyline points="${p}" fill="none" stroke="${c}" stroke-width="${w}" ${dash ? `stroke-dasharray="${dash}"` : ""}/>`;
  const circle = (x, y, r, c, w = 3) => `<circle cx="${x}" cy="${y}" r="${r}" fill="none" stroke="${c}" stroke-width="${w}" shape-rendering="auto"/>`;
  const text = (x, y, s, t) => `<text x="${x}" y="${y}" fill="#e8e8e8" font-size="${s}" font-family="Liberation Sans" shape-rendering="auto">${t}</text>`;

  // parking rows: two bands of bays with a lane between and a heavier gap every so often
  const stalls = (x, y, w, h) => {
    const b = Math.round(h * 0.44 / 3) * 3;
    let s = rect(x, y, w, b, "url(#st)") + rect(x, y + h - b, w, b, "url(#st)");
    s += line(`${x},${y} ${x + w},${y}`, "#8a8a8a", 3) + line(`${x},${y + h} ${x + w},${y + h}`, "#8a8a8a", 3);
    for (let gx = x + 45; gx < x + w; gx += 45) s += rect(gx, y, 6, h, "#000");
    return s;
  };

  const outline = "465,148 1157,148 1157,290 1185,290 1185,435 1200,435 1200,1000 1210,1000 1210,1308 1180,1308 1180,1337 1150,1337 1150,1365 935,1365 935,1378 722,1378 722,1365 422,1365 422,1255 402,1255 402,1080 378,1080 378,1020 290,1010 268,1022 133,1018 133,945 148,945 148,895 133,895 133,705 148,705 148,665 133,665 133,615 150,600 150,320 133,320 133,290 120,255 120,240 150,225 155,160 465,160";

  const hatchAreas = [[480,180,675,28],[135,245,330,45],[510,240,290,50],[900,235,265,45],[1115,290,70,145],[855,380,290,28],[1130,435,55,60],[860,465,330,28],[900,555,290,50],[133,615,300,45],[510,690,340,60],[465,680,40,300],[510,785,345,25],[510,870,345,25],[480,955,375,30],[890,1005,320,30],[637,1045,215,30],[637,1133,172,27],[640,1218,170,27],[405,1205,230,35],[890,1205,290,35],[422,1315,230,50],[930,1315,220,50],[655,1290,45,75],[135,980,250,38],[850,300,45,160]];

  const purple = [[155,160,310,30],[465,148,690,32],[190,218,30,15],[250,218,70,30],[375,218,90,30],[435,248,30,40],[508,208,60,32],[605,208,30,30],[637,208,43,30],[680,208,30,15],[735,208,72,30],[855,208,80,30],[855,248,45,42],[945,280,30,15],[1000,282,30,15],[1050,282,30,15],[1110,275,40,15],[1143,290,32,140],[897,322,215,58],[880,408,232,58],[897,495,290,58],[897,582,40,20],[1030,582,30,25],[1140,582,40,30],[897,805,215,60],[1157,805,40,60],[148,680,30,260],[205,725,58,185],[290,725,58,185],[375,725,60,185],[462,780,12,160],[507,755,345,30],[507,810,75,60],[597,810,212,60],[825,810,30,60],[480,895,375,60],[897,890,50,30],[995,890,90,30],[1125,890,70,30],[890,970,290,30],[190,950,30,35],[250,950,20,30],[320,940,20,30],[390,950,30,35],[430,950,30,35],[380,1020,130,30],[535,985,60,65],[680,985,172,60],[637,1075,172,58],[637,1160,172,58],[920,1035,60,165],[1007,1035,60,165],[1092,1035,60,165],[1180,1005,30,300],[402,1080,35,170],[462,1080,58,125],[548,1080,58,125],[637,1245,172,60],[847,1245,70,60],[890,1235,50,35],[1000,1235,15,30],[1045,1235,15,30],[1120,1235,25,30],[710,1332,210,33],[1150,1308,30,30],[505,1240,20,30],[555,1240,20,30],[600,1245,30,15]];

  const stairs = [[188,232],[325,230],[566,234],[718,230],[950,218],[1085,214],[960,592],[1095,592],[168,952],[270,957],[368,952],[468,952],[474,1242],[578,1242],[532,1264],[968,1244],[1078,1250],[948,907],[1088,907]];
  const greens = [[255,270],[695,268],[250,632],[640,730],[292,990],[445,1292],[1050,943]];

  function base(fillId, brightGreen) {
    let s = `<polygon points="${outline}" fill="#3d3d3d"/>`;
    hatchAreas.forEach(a => {
      const [x, y, w, h] = a;
      s += `<polygon points="${x + 30},${y} ${x + w},${y} ${x + w},${y + h} ${x},${y + h} ${x},${y + 20}" fill="url(#hatch)"/>`;
    });
    s += rect(907, 610, 270, 45, "url(#hatch2)");
    purple.forEach(a => s += rect(a[0], a[1], a[2], a[3], `url(#${fillId})`));
    // dotted walls
    s += `<polygon points="${outline}" fill="none" stroke="#a0a0a0" stroke-width="4" stroke-dasharray="4 2"/>`;
    [["135,290 465,290"],["135,615 440,615"],["900,235 1165,235 1165,275 900,275"],["510,240 800,240 800,288"],["422,1315 655,1315 655,1365"],["930,1315 1150,1315"],["133,980 380,980"],["640,985 640,1045 852,1045"],["425,1255 650,1275 700,1290 700,1365"],["890,1270 950,1270 1000,1290 1150,1290"],["847,1075 847,1215 890,1215 890,990"],["1180,1205 1180,1245 1210,1245"]].forEach(p => s += line(p[0], "#a0a0a0", 4, "4 2"));
    // grids
    let g = "";
    for (let x = 165; x < 1210; x += 43) for (let y = 170; y < 1370; y += 43) if (rnd(5) > 0) g += rect(x, y, 4, 4, "#22c3cc");
    s += `<g clip-path="url(#bclip)">${g}</g>`;
    s += line("507,755 1197,755", "#22b4bc", 3) + line("855,525 1195,525", "#22b4bc", 3) + line("895,352 1170,352", "#22b4bc", 3);
    s += line("405,1203 1210,1203", "#22b4bc", 3) + line("480,920 1197,920", "#22b4bc", 3);
    s += line("637,985 637,1245", "#22b4bc", 3) + line("320,680 320,950", "#22b4bc", 3) + line("855,530 855,990", "#22b4bc", 3) + line("475,720 475,940", "#22b4bc", 3);
    stairs.forEach(p => {
      s += rect(p[0], p[1], 30, 30, "url(#hatch)") + line(`${p[0] + 6},${p[1] + 8} ${p[0] + 6},${p[1] + 26} ${p[0] + 24},${p[1] + 26} ${p[0] + 24},${p[1] + 8}`, brightGreen ? "#00e000" : "#22c3cc", 3) + rect(p[0] + 12, p[1] + 12, 6, 6, "#d8d020");
      if (brightGreen) s += line(`${p[0] + 10},${p[1] + 4} ${p[0] + 20},${p[1] + 4}`, "#00e5ee", 3);
    });
    greens.forEach(p => s += circle(p[0], p[1], 12, "#29a829"));
    // small red and blue marks
    [[150,962],[810,1022],[510,1350],[790,1370],[1040,1345],[920,948],[1180,948],[990,692],[905,700],[650,1005],[650,1028],[960,1258],[1105,1258]].forEach(p => s += rect(p[0], p[1], 10, 4, "#c02020"));
    s += rect(122, 965, 9, 5, "#e01010");
    s += line("850,1120 885,1120 872,1190 860,1190 850,1120", "#5a7ab0", 3) + line("835,1183 900,1183", "#5a7ab0", 3) + line("850,1100 888,1100", "#5a7ab0", 3, "4 3");
    if (brightGreen) {
      s += line("110,985 160,985 160,1000 250,1000", "#00e000", 4, "14 6") + line("400,1285 630,1285", "#00e000", 4, "14 6") + line("898,1310 1130,1310", "#00e000", 4, "14 6");
    }
    // rulers
    s += line("118,105 897,105", "#00a800", 5) + line("85,105 85,722", "#00b000", 4) + line("118,1406 1210,1406", "#00e000", 6);
    for (let x = 120; x <= 897; x += 43) s += line(`${x},90 ${x},128`, "#00c800", 3) + rect(x - 1, 90, 4, 4, "#d0ffd0");
    for (let y = 120; y <= 722; y += 43) s += line(`72,${y} 110,${y}`, "#00c000", 3) + rect(78, y - 1, 4, 4, "#d0ffd0");
    for (let x = 120; x <= 1210; x += 43) s += line(`${x},1392 ${x},1418`, "#00c800", 3);
    // axis bubbles
    s += circle(60, 138, 36, "#1f7a1f") + circle(133, 208, 34, "#1f7a1f");
    s += `<ellipse cx="100" cy="97" rx="17" ry="10" fill="none" stroke="#e8e8e8" stroke-width="3"/><ellipse cx="100" cy="125" rx="17" ry="9" fill="none" stroke="#e8e8e8" stroke-width="3"/>`;
    s += `<rect x="119" y="132" width="16" height="16" fill="none" stroke="#c01010" stroke-width="4"/>`;
    s += text(46, 150, 44, "R") + text(48, 162, 40, "A") + text(88, 188, 48, "000") + text(112, 226, 48, "12");
    return s;
  }

  // left sheet: lighting layout
  function coreLeft() {
    let s = `<polygon points="150,295 770,295 770,350 810,350 810,500 855,500 855,672 510,672 510,680 440,680 440,600 150,600" fill="#000"/>`;
    [[205,330,230,55],[510,330,215,50],[205,412,230,55],[510,412,290,55],[205,503,260,50],[510,503,75,50],[595,530,215,55],[510,590,80,45],[595,590,255,45]].forEach(a => s += stalls(a[0], a[1], a[2], a[3]));
    s += rect(180, 297, 260, 25, "#5c0000") + rect(470, 297, 300, 28, "#5c0000");
    s += line("150,322 180,322 180,590", "#888", 4) + line("440,325 465,325 465,600", "#888", 4) + line("205,328 435,328", "#9a9", 3) + line("510,328 725,328 725,380", "#9c9", 3) + line("595,528 595,672", "#999", 5) + line("440,340 440,500", "#aaa", 5);
    s += line("150,320 165,320 165,590", "#777", 12, "5 7");
    [["190,305 430,305"],["470,310 760,310"],["205,358 435,358"],["510,355 725,355"],["205,395 415,395"],["535,398 795,398"],["205,475 465,475"],["520,478 795,478"],["205,528 465,528"],["510,528 585,528"],["600,557 810,557"],["190,575 360,575"],["610,580 810,580"],["510,612 590,612"],["600,612 850,612"],["510,650 590,650"],["605,650 850,650"],["195,310 195,480"],["455,340 455,600"],["490,330 490,660"]].forEach(p => s += line(p[0], "#d01010", 3, "18 8"));
    s += line("260,540 260,600", "#e01010", 4) + line("445,540 445,600", "#e01010", 4) + line("550,620 590,620 590,680", "#e01010", 4) + line("420,630 490,630", "#e01010", 4);
    [["205,380 415,380"],["510,380 795,380 795,495"],["205,468 465,468"],["205,468 205,552 415,552"],["468,380 468,660"],["510,495 795,495"],["510,552 585,552"],["595,640 850,640"],["640,590 640,640"],["770,590 770,640"],["358,560 358,590"],["545,340 520,340"],["815,555 815,672"],["510,345 550,345"],["225,415 225,465"],["355,430 400,430 400,460"],["250,415 250,465"],["730,420 730,465"]].forEach(p => s += line(p[0], "#e000e0", 4));
    [["205,335 205,380"],["450,470 450,500"],["725,335 725,378"],["505,500 505,672"],["510,650 590,650"],["595,530 810,530"],["640,552 810,552"]].forEach(p => s += line(p[0], "#70b060", 3));
    [[770,290,"#00e0e0"],[440,300,"#00c000"],[600,290,"#00e0e0"]].forEach(p => s += rect(p[0], p[1], 4, 30, p[2]));
    s += line("680,290 770,290", "#00e0e0", 4);
    for (let i = 0; i < 60; i++) s += rect(150 + rnd(700), 300 + rnd(370), 4 + rnd(10), 4, "#10c010");
    s += rect(208, 428, 8, 8, "#e8e820") + rect(508, 428, 8, 8, "#e8e820") + rect(800, 428, 8, 8, "#e8e820") + rect(845, 515, 8, 8, "#e8e820") + rect(310, 525, 18, 3, "#fff") + rect(640, 393, 14, 3, "#fff") + rect(640, 481, 14, 3, "#fff");
    return s;
  }

  // right sheet: trunk layout, uses the crop's own x
  function coreRight() {
    let s = `<polygon points="110,295 745,290 745,350 785,350 785,500 830,500 830,672 485,680 420,655 420,600 120,600" fill="#000"/>`;
    [[185,325,230,58],[485,325,300,58],[185,412,230,58],[545,412,150,60],[185,498,260,58],[485,498,260,58],[485,585,345,60]].forEach(a => s += stalls(a[0], a[1], a[2], a[3]));
    s += line("120,330 120,580 140,580", "#777", 12, "5 7");
    [["145,310 145,380 415,380"],["185,552 355,552"],["232,480 232,550"],["545,490 660,490"],["635,555 635,680"],["535,530 535,640"],["720,635 830,640"],["510,335 510,380"]].forEach(p => s += line(p[0], "#e000e0", 4));
    [["185,405 415,405"],["255,415 255,470"],["395,600 385,640"],["485,335 510,335"],["700,410 700,470"],["95,477 120,477"],["485,690 560,675"],["590,530 595,620"]].forEach(p => s += line(p[0], "#a07a10", 4));
    [["455,300 455,480 545,480","5"],["425,330 455,330","4"],["670,330 735,330","4"],["670,330 670,470","4"],["670,400 785,400","5"],["765,350 765,400","4"],["120,480 160,495","4"],["395,430 395,520","4"],["680,700 680,672 720,672","4"],["510,672 560,672","4"],["415,575 435,575 435,600","4"]].forEach(p => s += line(p[0], "#f0e000", p[1]));
    [["150,308 290,308 290,395","3"],["110,295 745,292 745,320","4"],["120,320 120,600","4"],["115,465 290,465","5"],["290,410 290,590","6"],["290,522 545,522","8"],["420,335 440,335 440,525","4"],["545,408 775,408","4"],["545,408 545,470 780,470","4"],["350,430 350,520","3"],["350,430 415,430","3"],["185,410 185,460","4"],["290,578 400,582","4"],["420,625 720,625 720,555 830,555","4"],["755,555 755,680","4"],["545,525 545,625","4"],["570,525 570,625","4"],["515,625 515,690","4"],["410,585 410,655 385,655","4"],["120,615 170,632","3"],["485,690 485,720 515,720","4"],["760,505 830,505 830,695","4"],["725,410 725,470","3"],["310,410 310,465 415,465","3"],["490,415 510,415 510,470","4"],["378,245 378,290","5"]].forEach(p => s += line(p[0], "#00e5ee", p[1]));
    for (let i = 0; i < 70; i++) s += rect(130 + rnd(690), 305 + rnd(375), 8 + rnd(24), 3, rnd(3) ? "#00c800" : "#a0d000");
    [["485,250 785,250"],["485,250 485,290"],["785,250 785,290"],["550,235 550,270"],["640,235 640,270"],["730,235 730,270"]].forEach(p => s += line(p[0], "#00e000", 4, "14 6"));
    s += rect(245, 585, 18, 30, "#00d000") + rect(230, 342, 14, 3, "#fff") + rect(615, 393, 16, 3, "#fff") + rect(702, 435, 16, 3, "#fff") + rect(245, 525, 14, 3, "#fff");
    return s;
  }

  const frames = `<rect x="36" y="45" width="1233" height="1400" fill="none" stroke="#c8c8c8" stroke-width="3"/><rect x="1272" y="45" width="1230" height="1400" fill="none" stroke="#c8c8c8" stroke-width="3"/>`;
  const clip = `<clipPath id="bclip"><polygon points="${outline}"/></clipPath>`;
  document.getElementById("cad").insertAdjacentHTML("beforeend",
    clip + frames +
    `<g>${base("pl", false)}${coreLeft()}</g>` +
    `<g transform="translate(1237.5 0)">${base("pr", true)}</g>` +
    `<g transform="translate(1260 0)">${coreRight()}</g>`);
</script>
</body>
</html>
